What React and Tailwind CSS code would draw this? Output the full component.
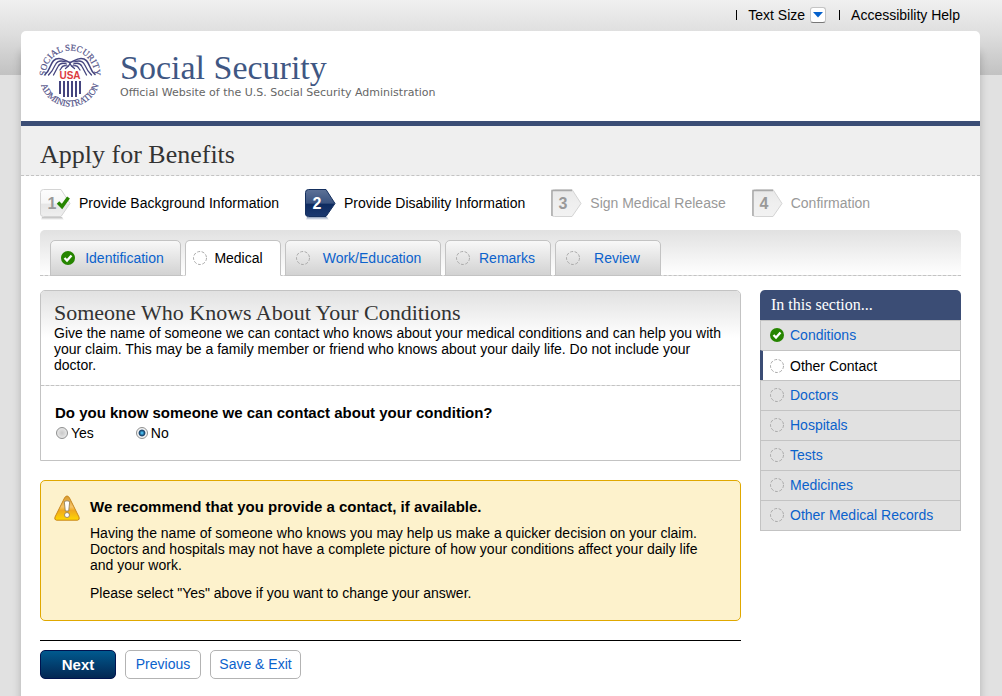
import React, { useState } from 'react';
import clsx from 'clsx';

const steps = [
  { number: 1, label: 'Provide Background Information', state: 'done' },
  { number: 2, label: 'Provide Disability Information', state: 'current' },
  { number: 3, label: 'Sign Medical Release', state: 'todo' },
  { number: 4, label: 'Confirmation', state: 'todo' },
];

const tabs = [
  { label: 'Identification', width: 'w-[131px]', done: true },
  { label: 'Medical', width: 'w-[96px]', active: true },
  { label: 'Work/Education', width: 'w-[156px]' },
  { label: 'Remarks', width: 'w-[106px]' },
  { label: 'Review', width: 'w-[106px]' },
];

const sections = [
  { label: 'Conditions', done: true },
  { label: 'Other Contact', active: true },
  { label: 'Doctors' },
  { label: 'Hospitals' },
  { label: 'Tests' },
  { label: 'Medicines' },
  { label: 'Other Medical Records' },
];

const serif = "font-['Liberation_Serif',serif]";

function Seal() {
  return (
    <svg width="62" height="62" viewBox="0 0 62 62" role="img" aria-label="Social Security Administration seal" className="shrink-0 overflow-visible">
      <defs>
        <path id="seal-top" d="M7.500 38A24.500 24.500 0 1 1 54.500 38" />
        <path id="seal-bottom" d="M1.500 27A30 30 0 1 0 60.500 27" />
      </defs>
      <g fill="#55558a" fontFamily="Liberation Serif, serif" fontSize="9" textAnchor="middle" stroke="#55558a" strokeWidth=".2">
        <text><textPath href="#seal-top" startOffset="50%">SOCIAL SECURITY</textPath></text>
        <text><textPath href="#seal-bottom" startOffset="50%">ADMINISTRATION</textPath></text>
      </g>
      {['', 'translate(62 0) scale(-1 1)'].map((t) => (
        <g key={t} transform={t || undefined} fill="none" stroke="#45457f" strokeLinecap="round">
          <path strokeWidth="1.600" d="M31 18.500C28 18 25 14.500 20 14.500C14 14.500 13 19 10.500 24Q9 28 6 30.500" />
          <path strokeWidth="1.300" d="M27 18C23 16.500 18.500 16.500 16.500 20.500L13 27L9.500 31" />
          <path strokeWidth="1.300" d="M27.500 20C23.500 18.500 20.500 19.500 19 22.500L14.500 31" />
          <path strokeWidth="1.300" d="M28.500 22C25.500 21 23 22 22 24.500L21 26" />
          <path strokeWidth="1.300" d="M31 19.500L29.500 22L26.500 24.500" />
        </g>
      ))}
      <text x="31" y="35" textAnchor="middle" fill="#dc3a3f" fontFamily="Liberation Sans, sans-serif" fontSize="10" fontWeight="bold">USA</text>
      <g stroke="#45457f" strokeWidth="2">
        {[21, 25, 29, 33, 37, 41].map((x, i) => (
          <path key={x} d={`M${x} 37V${i === 0 || i === 5 ? 50 : 53}`} />
        ))}
      </g>
    </svg>
  );
}

function StatusIcon({ done }) {
  if (done) {
    return (
      <svg width="14" height="14" viewBox="0 0 14 14" className="shrink-0" aria-hidden="true">
        <circle cx="7" cy="7" r="7" fill="#268500" />
        <path d="M3.500 7L6 9.500L10.500 4.500" fill="none" stroke="#fff" strokeWidth="2.300" />
      </svg>
    );
  }
  return (
    <svg width="14" height="14" viewBox="0 0 14 14" className="shrink-0" aria-hidden="true">
      <circle cx="7" cy="7" r="6.500" fill="none" stroke="#aaa" strokeDasharray="3 1.500" />
    </svg>
  );
}

function StepIcon({ number, state }) {
  const id = `step-${number}`;
  const current = state === 'current';
  const todo = state === 'todo';
  return (
    <svg width="32" height="32" viewBox="0 0 32 32" className="shrink-0" aria-hidden="true">
      <defs>
        <linearGradient id={id} x1="0" y1="0" x2="0" y2="1">
          <stop offset="0" stopColor={current ? '#5d7297' : todo ? '#e8e8e8' : '#fdfdfd'} />
          <stop offset="0.500" stopColor={current ? '#3a5380' : todo ? '#efefef' : '#f6f6f6'} />
          <stop offset="0.550" stopColor={current ? '#0e2b60' : todo ? '#efefef' : '#e6e6e6'} />
          <stop offset="1" stopColor={current ? '#1b3970' : todo ? '#f2f2f2' : '#efefef'} />
        </linearGradient>
        <linearGradient id={`${id}-shade`} x1="0" y1="0" x2="0" y2="1">
          <stop offset="0" stopColor={current ? '#8b9cb9' : '#bdbdbd'} />
          <stop offset="1" stopColor="#fff" />
        </linearGradient>
      </defs>
      {!todo && <path d="M2 28H22L24 31H1Z" fill={`url(#${id}-shade)`} />}
      <path
        d="M3.500 .5H21L30 14.500L21 27.500H3.500Q.5 27.500.5 25V3.500Q.5 .5 3.500 .5Z"
        fill={`url(#${id})`}
        stroke={current ? '#15305f' : '#d4d4d4'}
      />
      {todo && <path d="M1 27V1.500H21" fill="none" stroke="#aaa" strokeWidth="1.500" />}
      <text x="12" y="20" textAnchor="middle" fontFamily="Liberation Sans, sans-serif" fontSize="16" fontWeight="bold" fill={current ? '#fff' : '#999'}>
        {number}
      </text>
      {state === 'done' && <path d="M18 13.500L22 17.500L28.500 8.500" fill="none" stroke="#268500" strokeWidth="3.500" />}
    </svg>
  );
}

function WarningIcon() {
  return (
    <svg width="26" height="26" viewBox="0 0 26 26" className="shrink-0" aria-hidden="true">
      <defs>
        <linearGradient id="warn" x1="0" y1="0" x2="0" y2="1">
          <stop offset="0" stopColor="#d99a2b" />
          <stop offset="0.450" stopColor="#f5c469" />
          <stop offset="0.600" stopColor="#f1a91e" />
          <stop offset="1" stopColor="#ffd800" />
        </linearGradient>
      </defs>
      <path d="M13 1Q14.500 1 15.500 3L25 22Q26 25 23.500 25.200H2.500Q0 25 1 22L10.500 3Q11.500 1 13 1Z" fill="url(#warn)" stroke="#c8861b" />
      <path d="M10.300 6.500Q13 5 15.700 6.500L14.700 16H11.300Z" fill="#fff" stroke="#8a7650" strokeWidth=".8" />
      <circle cx="13" cy="20" r="2.500" fill="#fff" stroke="#8a7650" strokeWidth=".8" />
    </svg>
  );
}

function TopBar() {
  return (
    <div className="flex h-[31px] items-center justify-end gap-[11px] pr-[42px] pb-[2px] text-[14px]">
      <span className="h-[10px] w-px bg-black"></span>
      <div className="flex items-center gap-[5px] pr-[2px]">
        <span id="text-size">Text Size</span>
        <button aria-labelledby="text-size" className="flex h-4 w-4 items-center justify-center rounded-[3px] border border-[#c4c4c4] border-b-[#777] bg-white">
          <svg width="10" height="6" viewBox="0 0 10 6" aria-hidden="true">
            <path d="M0 0H10L5 5.500Z" fill="#0561cc" />
          </svg>
        </button>
      </div>
      <span className="h-[10px] w-px bg-black"></span>
      <a href="#help">Accessibility Help</a>
    </div>
  );
}

function SideNav() {
  return (
    <nav aria-labelledby="side-title" className="w-[201px] shrink-0">
      <h2 id="side-title" className={clsx(serif, 'h-[30px] rounded-t-[5px] bg-[#3b4d75] pl-[11px] text-[16px] leading-[30px] text-white')}>
        In this section...
      </h2>
      <ul className="border-b border-[#c3c3c3]">
        {sections.map((s) => (
          <li key={s.label}>
            <a
              href="#section"
              className={clsx(
                'flex h-[30px] items-center gap-[6px] border-t border-r border-[#c3c3c3]',
                s.active ? 'border-l-[3px] border-l-[#3b4d75] bg-white pl-[7px] text-black' : 'border-l bg-[#e1e1e1] pb-[2px] pl-[9px] text-[#0b62cc]'
              )}
            >
              <StatusIcon done={s.done} />
              {s.label}
            </a>
          </li>
        ))}
      </ul>
    </nav>
  );
}

export default function App() {
  const [answer, setAnswer] = useState('no');

  return (
    <div className="min-h-screen bg-[#e1e1e1] bg-[linear-gradient(#f0f0f0,#dfdfdf_32px,#c2c2c2)] bg-[length:100%_75px] bg-no-repeat font-['Liberation_Sans',Arial,sans-serif] text-[14px] leading-4 text-black">
      <TopBar />
      <div className="mr-[22px] ml-[21px] min-h-[calc(100vh-31px)] rounded-t-[5px] bg-white shadow-[0_20px_9px_rgba(0,0,0,0.22)]">
        <header className="flex h-[95px] items-start gap-[19px] border-b-[5px] border-[#3b4d75] pt-[13px] pl-[18px]">
          <Seal />
          <div className="pt-[6px]">
            <div className={clsx(serif, 'text-[34px] leading-9 text-[#3f5783]')}>Social Security</div>
            <p className="font-['DejaVu_Sans',sans-serif] text-[11px] leading-[14px] text-[#666]">
              Official Website of the U.S. Social Security Administration
            </p>
          </div>
        </header>

        <div className="border-b border-dashed border-[#c3c3c3] bg-[#efefef] px-[19px] pt-[9px]">
          <h1 className={clsx(serif, 'text-[26px] leading-10 text-[#333]')}>Apply for Benefits</h1>
        </div>

        <div className="px-[19px]">
          <ol className="flex gap-[26px] pt-[13px]">
            {steps.map((s) => (
              <li key={s.number} className={clsx('flex items-start gap-[7px]', s.state === 'todo' && 'text-[#999]')}>
                <StepIcon number={s.number} state={s.state} />
                <span className="pt-[6px]">{s.label}</span>
              </li>
            ))}
          </ol>

          <nav aria-label="Application parts" className="mt-[9px] flex gap-1 rounded-t-[5px] border-b border-dashed border-[#c3c3c3] bg-linear-to-b from-[#e1e1e1] to-white px-[10px] pt-[10px]">
            {tabs.map((t) => (
              <a
                key={t.label}
                href="#tab"
                className={clsx(
                  '-mb-px flex h-9 items-center rounded-t-[5px] border border-[#c3c3c3]',
                  t.width,
                  t.active ? 'border-b-white bg-white pr-[10px] pl-[7px] text-black' : 'bg-linear-to-b from-[#f8f8f8] to-[#d2d2d2] pr-[6px] pl-[10px] text-[#0b62cc]'
                )}
              >
                <StatusIcon done={t.done} />
                <span className="flex-1 text-center">{t.label}</span>
              </a>
            ))}
          </nav>

          <div className="flex items-start gap-[19px] pt-[14px]">
            <main className="flex-1">
              <section className="rounded-t-[5px] border border-[#c3c3c3]">
                <div className="rounded-t-[4px] border-b border-dashed border-[#c3c3c3] bg-linear-to-b from-[#e1e1e1] to-white to-50% px-[13px] pt-[10px] pb-3">
                  <h2 className={clsx(serif, 'text-[22px] leading-6 text-[#333]')}>Someone Who Knows About Your Conditions</h2>
                  <p>
                    Give the name of someone we can contact who knows about your medical conditions and can help you with
                    your claim. This may be a family member or friend who knows about your daily life. Do not include your
                    doctor.
                  </p>
                </div>
                <fieldset className="px-[14px] pb-[19px]">
                  <legend className="pt-[19px] text-[15px] leading-4 font-bold">Do you know someone we can contact about your condition?</legend>
                  <div className="flex gap-[41px] pt-1">
                    {['Yes', 'No'].map((label) => (
                      <label key={label} className="flex items-center gap-[3px]">
                        <input
                          type="radio"
                          name="contact"
                          checked={answer === label.toLowerCase()}
                          onChange={() => setAnswer(label.toLowerCase())}
                          className="ml-px h-3 w-3 appearance-none rounded-full border border-[#8e8f8f] bg-radial from-[#c8c8c8] to-[#f4f4f4] checked:bg-radial checked:from-[#45b5e8] checked:from-10% checked:via-[#123f68] checked:via-40% checked:to-[#f4f4f4] checked:to-55%"
                        />
                        {label}
                      </label>
                    ))}
                  </div>
                </fieldset>
              </section>

              <section className="mt-[19px] flex items-start gap-[10px] rounded-[5px] border border-[#e0a800] bg-[#fdf2cc] py-[14px] pr-[30px] pl-[13px]">
                <WarningIcon />
                <div className="pt-1 pb-[5px]">
                  <h3 className="text-[15px] leading-4 font-bold">We recommend that you provide a contact, if available.</h3>
                  <p className="pt-[10px]">
                    Having the name of someone who knows you may help us make a quicker decision on your claim.
                    Doctors and hospitals may not have a complete picture of how your conditions affect your daily life
                    and your work.
                  </p>
                  <p className="pt-3">Please select "Yes" above if you want to change your answer.</p>
                </div>
              </section>

              <div className="mt-[19px] flex gap-[9px] border-t border-black pt-[9px] pb-4">
                <button className="h-[29px] w-[76px] rounded-[5px] border border-[#00134f] bg-linear-to-b from-[#005a8f] to-[#032753] text-[15px] font-bold text-white">Next</button>
                <button className="h-[29px] w-[76px] rounded-[5px] border border-[#b3b3b3] bg-white pb-[2px] text-[#0b62cc]">Previous</button>
                <button className="h-[29px] w-[91px] rounded-[5px] border border-[#b3b3b3] bg-white pb-[2px] text-[#0b62cc]">Save &amp; Exit</button>
              </div>
            </main>

            <SideNav />
          </div>
        </div>
      </div>
    </div>
  );
}
